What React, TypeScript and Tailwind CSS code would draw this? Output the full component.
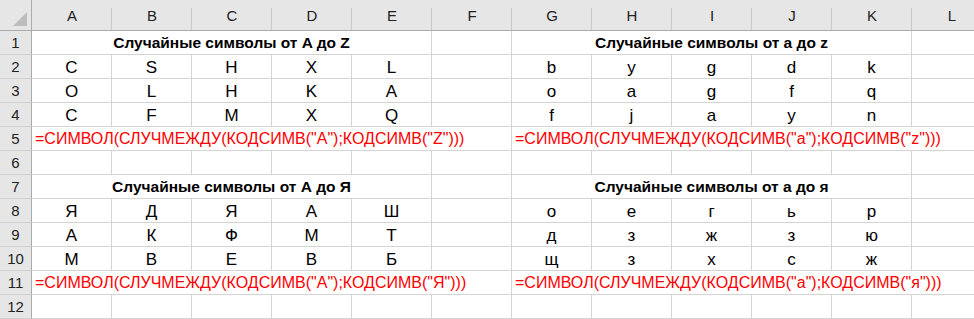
const cols = ['A', 'B', 'C', 'D', 'E', 'F', 'G', 'H', 'I', 'J', 'K', 'L']

type Cell = { text?: string; span?: number; bold?: boolean; formula?: boolean }

const letters = (left: string[], right: string[]): Cell[] => [
  ...left.map((t) => ({ text: t })),
  {},
  ...right.map((t) => ({ text: t })),
  {},
]

const empty = (): Cell[] => cols.map(() => ({}))

const title = (l: string, r: string): Cell[] => [
  { text: l, span: 5, bold: true },
  {},
  { text: r, span: 5, bold: true },
  {},
]

const formula = (a: string, b: string, c: string, d: string): Cell[] => [
  { text: `=СИМВОЛ(СЛУЧМЕЖДУ(КОДСИМВ("${a}");КОДСИМВ("${b}")))`, span: 6, formula: true },
  { text: `=СИМВОЛ(СЛУЧМЕЖДУ(КОДСИМВ("${c}");КОДСИМВ("${d}")))`, span: 6, formula: true },
]

const rows: Cell[][] = [
  title('Случайные символы от A до Z', 'Случайные символы от a до z'),
  letters(['C', 'S', 'H', 'X', 'L'], ['b', 'y', 'g', 'd', 'k']),
  letters(['O', 'L', 'H', 'K', 'A'], ['o', 'a', 'g', 'f', 'q']),
  letters(['C', 'F', 'M', 'X', 'Q'], ['f', 'j', 'a', 'y', 'n']),
  formula('A', 'Z', 'a', 'z'),
  empty(),
  title('Случайные символы от А до Я', 'Случайные символы от а до я'),
  letters(['Я', 'Д', 'Я', 'А', 'Ш'], ['о', 'е', 'г', 'ь', 'р']),
  letters(['А', 'К', 'Ф', 'М', 'Т'], ['д', 'з', 'ж', 'з', 'ю']),
  letters(['М', 'В', 'Е', 'В', 'Б'], ['щ', 'з', 'х', 'с', 'ж']),
  formula('А', 'Я', 'а', 'я'),
  empty(),
]

const spanClass: Record<number, string> = {
  1: 'col-span-1',
  5: 'col-span-5',
  6: 'col-span-6',
}

const cellStyle = (cell: Cell) => {
  if (cell.formula) return 'justify-start pl-[3px] text-[16px] text-[#ff0000]'
  if (cell.bold) return 'justify-center text-[15.5px] font-bold'
  return 'justify-center text-[17px]'
}

export default function App() {
  return (
    <div className="w-[974px] h-[319px] overflow-hidden bg-white font-['Liberation_Sans',sans-serif] text-[15px] text-black">
      <div className="grid grid-cols-[32px_repeat(12,80px)] grid-rows-[31px_repeat(12,24px)] w-[992px]">
        {/* corner */}
        <div className="relative bg-[#e6e6e6] border-r border-b border-[#ababab]">
          <svg className="absolute right-[3px] bottom-[3px]" width="16" height="16" viewBox="0 0 16 16">
            <polygon points="1,15 15,15 15,1" fill="#bdbdbd" />
          </svg>
        </div>
        {/* column headers */}
        {cols.map((c) => (
          <div
            key={c}
            className="relative flex items-end justify-center pb-[3px] bg-[#e6e6e6] border-b border-[#ababab] text-[#222] after:absolute after:right-0 after:top-[8px] after:bottom-0 after:w-px after:bg-[#c8c8c8]"
          >
            {c}
          </div>
        ))}
        {rows.map((row, r) => (
          <div key={r} className="contents">
            <div className="flex items-center justify-center pt-[2px] bg-[#e6e6e6] border-r border-b border-r-[#ababab] border-b-[#d0d0d0] text-[#222]">
              {r + 1}
            </div>
            {row.map((cell, i) => (
              <div
                key={i}
                className={`flex items-center pt-[1px] leading-none border-r border-b border-[#d4d4d4] whitespace-nowrap overflow-visible ${spanClass[cell.span ?? 1]} ${cellStyle(cell)}`}
              >
                {cell.text}
              </div>
            ))}
          </div>
        ))}
      </div>
    </div>
  )
}
